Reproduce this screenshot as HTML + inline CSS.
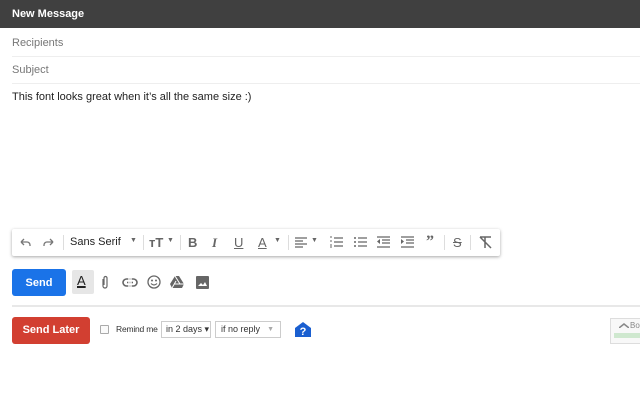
<!DOCTYPE html>
<html><head><style>
*{margin:0;padding:0;box-sizing:border-box}
body{width:640px;height:400px;background:#fff;font-family:"Liberation Sans",Arial,sans-serif;position:relative;overflow:hidden;color:#222}
.a{position:absolute}
.hdr{left:0;top:0;width:640px;height:28px;background:#404040;color:#fff;font-weight:bold;font-size:11px;line-height:29px;padding-left:12px}
.fld{left:12px;width:628px;font-size:11px;color:#777;border-bottom:1px solid #eee}
.ic{position:absolute;color:#666;font-size:12px}
.tb{left:12px;top:229px;width:488px;height:27px;background:#fff;box-shadow:0 1px 3px rgba(0,0,0,.35);border-radius:2px}
.sep{position:absolute;top:6px;width:1px;height:15px;background:#ddd}
svg{position:absolute}
</style></head><body>
<div class="a hdr">New Message</div>
<div class="a fld" style="top:30px;height:27px;line-height:26px">Recipients</div>
<div class="a fld" style="top:57px;height:27px;line-height:26px">Subject</div>
<div class="a" style="left:12px;top:91px;font-size:11px;color:#222">This font looks great when it’s all the same size :)</div>

<div class="a tb">
 <svg style="left:6px;top:7px" width="14" height="14" viewBox="0 0 14 14"><path d="M3 6h6a3 3 0 0 1 3 3v1M3 6l3-3M3 6l3 3" stroke="#777" stroke-width="1.3" fill="none"/></svg>
 <svg style="left:30px;top:7px" width="14" height="14" viewBox="0 0 14 14"><path d="M11 6H5a3 3 0 0 0-3 3v1M11 6L8 3M11 6L8 9" stroke="#777" stroke-width="1.3" fill="none"/></svg>
 <div class="sep" style="left:51px"></div>
 <div class="ic" style="left:58px;top:7px;font-size:11px;color:#222">Sans Serif</div>
 <div class="ic" style="left:118px;top:8px;font-size:7px">▼</div>
 <div class="sep" style="left:131px"></div>
 <div class="ic" style="left:137px;top:6px;font-weight:bold;font-size:13px">ᴛT</div>
 <div class="ic" style="left:155px;top:8px;font-size:7px">▼</div>
 <div class="sep" style="left:168px"></div>
 <div class="ic" style="left:176px;top:6px;font-weight:bold;font-size:13px">B</div>
 <div class="ic" style="left:200px;top:6px;font-weight:bold;font-style:italic;font-size:13px;font-family:'Liberation Serif'">I</div>
 <div class="ic" style="left:222px;top:6px;font-size:13px;text-decoration:underline">U</div>
 <div class="ic" style="left:246px;top:6px;font-size:13px;text-decoration:underline">A</div>
 <div class="ic" style="left:262px;top:8px;font-size:7px">▼</div>
 <div class="sep" style="left:276px"></div>
 <svg style="left:283px;top:8px" width="12" height="11"><path d="M0 1h12M0 4h8M0 7h12M0 10h8" stroke="#666" stroke-width="1.2"/></svg>
 <div class="ic" style="left:299px;top:8px;font-size:7px">▼</div>
 <svg style="left:318px;top:7px" width="13" height="12"><path d="M4 2h9M4 6h9M4 10h9" stroke="#666" stroke-width="1.2"/><path d="M0 1h2M0 5h2M0 9h2M0 11h2" stroke="#666" stroke-width="1"/></svg>
 <svg style="left:342px;top:7px" width="13" height="12"><path d="M4 2h9M4 6h9M4 10h9" stroke="#666" stroke-width="1.2"/><circle cx="1" cy="2" r="1" fill="#666"/><circle cx="1" cy="6" r="1" fill="#666"/><circle cx="1" cy="10" r="1" fill="#666"/></svg>
 <svg style="left:365px;top:7px" width="13" height="12"><path d="M0 1h13M5 4h8M5 7h8M0 11h13" stroke="#666" stroke-width="1.2"/><path d="M3 3v5L0 5.5z" fill="#666"/></svg>
 <svg style="left:389px;top:7px" width="13" height="12"><path d="M0 1h13M5 4h8M5 7h8M0 11h13" stroke="#666" stroke-width="1.2"/><path d="M0 3v5l3-2.5z" fill="#666"/></svg>
 <div class="ic" style="left:414px;top:4px;font-weight:bold;font-size:16px;font-family:'Liberation Serif'">”</div>
 <div class="sep" style="left:432px"></div>
 <div class="ic" style="left:441px;top:6px;font-size:13px;text-decoration:line-through">S</div>
 <div class="sep" style="left:458px"></div>
 <svg style="left:467px;top:7px" width="13" height="13"><path d="M1 1h11M6 1v11M1 1l11 11" stroke="#666" stroke-width="1.5"/></svg>
</div>

<div class="a" style="left:12px;top:269px;width:54px;height:27px;background:#1a73e8;border-radius:3px;color:#fff;font-weight:bold;font-size:11px;line-height:28px;text-align:center">Send</div>
<div class="a" style="left:72px;top:270px;width:22px;height:24px;background:#e6e6e6;border-radius:2px"></div>
<div class="ic" style="left:77px;top:273px;font-size:13px;color:#222;text-decoration:underline;text-decoration-thickness:2px">A</div>
<svg style="left:101px;top:275px" width="8" height="15"><path d="M2 4v7a2 2 0 0 0 4 0V3a1.3 1.3 0 0 0-3 0v7" stroke="#666" stroke-width="1.2" fill="none"/></svg>
<svg style="left:122px;top:278px" width="16" height="9"><rect x="1" y="1" width="14" height="7" rx="3.5" stroke="#666" stroke-width="1.6" fill="none"/><path d="M5 4.5h6" stroke="#666" stroke-width="1.6"/><path d="M7 0v9M9 0v9" stroke="#fff" stroke-width="1.4"/></svg>
<svg style="left:147px;top:275px" width="14" height="14"><circle cx="7" cy="7" r="6" stroke="#666" stroke-width="1.3" fill="none"/><circle cx="5" cy="5.5" r="1" fill="#666"/><circle cx="9" cy="5.5" r="1" fill="#666"/><path d="M4 8.5q3 3 6 0" stroke="#666" stroke-width="1.2" fill="none"/></svg>
<svg style="left:170px;top:276px" width="14" height="12"><path d="M5 0h4l5 8-2 4H2L0 8z" fill="#666"/><path d="M5 0l5 8M2 12l4-7M4 8h10" stroke="#fff" stroke-width="1"/></svg>
<svg style="left:196px;top:276px" width="13" height="13"><rect width="13" height="13" rx="1" fill="#666"/><path d="M2 10l3-3 2 2 2-3 2 4z" fill="#fff"/></svg>

<div class="a" style="left:12px;top:305px;width:628px;height:2px;background:#e8e8e8"></div>

<div class="a" style="left:12px;top:317px;width:78px;height:27px;background:#d23f31;border-radius:3px;color:#fff;font-weight:bold;font-size:11px;line-height:27px;text-align:center">Send Later</div>
<div class="a" style="left:100px;top:325px;width:9px;height:9px;border:1px solid #aaa;border-radius:1px;background:#fafafa"></div>
<div class="a" style="left:116px;top:324px;font-size:8.5px;color:#333;letter-spacing:-0.2px">Remind me</div>
<div class="a" style="left:161px;top:321px;width:50px;height:17px;border:1px solid #ccc;font-size:9px;line-height:15px;padding-left:4px;color:#333">in 2 days ▾</div>
<div class="a" style="left:215px;top:321px;width:66px;height:17px;border:1px solid #ccc;font-size:9px;line-height:15px;padding-left:5px;color:#333">if no reply<span style="position:absolute;right:6px;color:#aaa;font-size:7px">▼</span></div>
<svg style="left:295px;top:322px" width="16" height="15"><path d="M8 0L16 6v9H0V6z" fill="#1a5fd0"/><text x="8" y="13" font-size="11" font-weight="bold" fill="#fff" text-anchor="middle" font-family="Liberation Sans">?</text></svg>

<div class="a" style="left:610px;top:318px;width:32px;height:26px;border:1px solid #ddd;background:#f8f8f8"></div>
<svg style="left:619px;top:323px" width="10" height="5"><path d="M0 5L5 1l5 4" stroke="#888" stroke-width="1.5" fill="none"/></svg>
<div class="a" style="left:630px;top:321px;font-size:8px;color:#888">Bo</div>
<div class="a" style="left:614px;top:333px;width:26px;height:5px;background:#cfe8cf"></div>
</body></html>
